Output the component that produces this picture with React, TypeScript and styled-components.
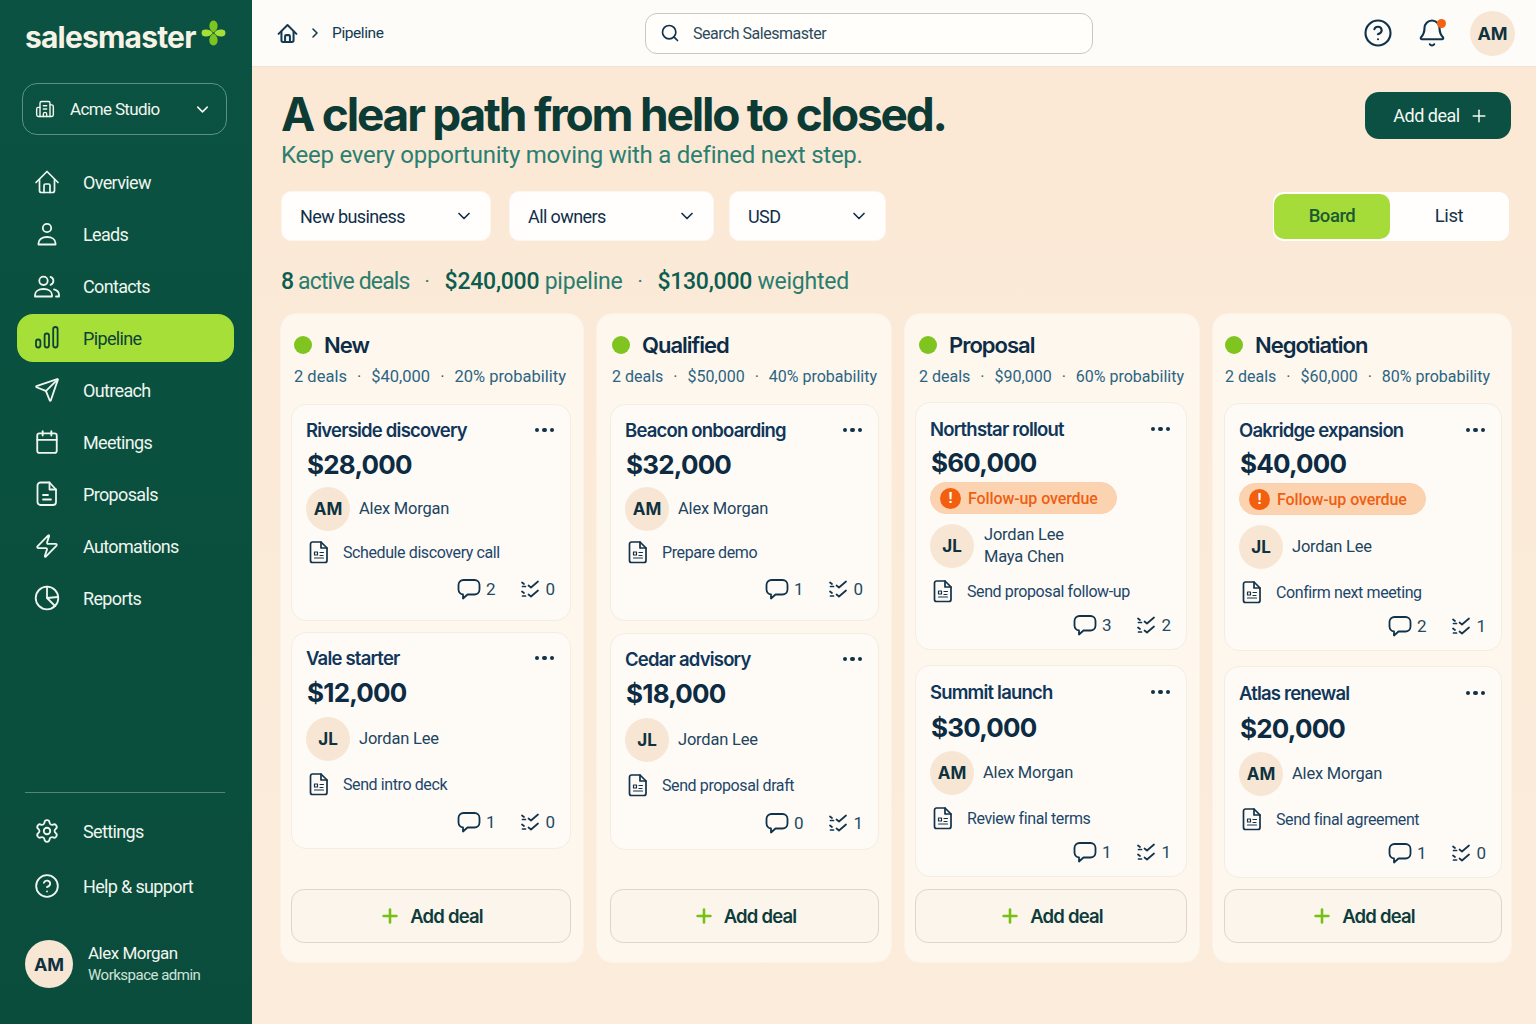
import React from 'react';
import styled, { createGlobalStyle } from 'styled-components';
import {
  Send,
  Calendar,
  Zap,
  Settings,
  CircleHelp,
  Bell,
  Search,
  ChevronDown,
  ChevronRight,
  Plus,
  Building2,
} from 'lucide-react';

const GlobalStyle = createGlobalStyle`
  html, body {
    margin: 0;
    padding: 0;
    background: #fbe9d6;
  }
  * {
    box-sizing: border-box;
  }
  body {
    font-family: Roboto, "Noto Sans", sans-serif;
    color: #10324a;
  }
`;

const headingFont = 'Inter, "Noto Sans", sans-serif';

const Shell = styled.div`
  display: flex;
  width: 1536px;
  height: 1024px;
  overflow: hidden;
`;

const Sidebar = styled.aside`
  flex: 0 0 252px;
  display: flex;
  flex-direction: column;
  padding: 0 18px 36px 17px;
  background: linear-gradient(180deg, #0b5242 0%, #0a4f3e 60%, #0b4d3d 100%);
  color: #f1f6ee;
`;

const Brand = styled.div`
  display: flex;
  align-items: center;
  gap: 5px;
  height: 83px;
  padding: 0 0 9px 8px;
`;

const BrandName = styled.span`
  font-family: ${headingFont};
  font-size: 30px;
  font-weight: 700;
  letter-spacing: -0.8px;
  color: #f7f2e6;
`;

const BrandMark = styled.svg`
  width: 25px;
  height: 28px;
  margin-top: -9px;
`;

const WorkspaceSelect = styled.div`
  display: flex;
  align-items: center;
  height: 52px;
  margin: 0 7px 0 5px;
  padding: 0 14px 0 12px;
  border: 1px solid rgba(210, 232, 222, 0.42);
  border-radius: 15px;
  font-size: 17px;
  letter-spacing: -0.65px;
  gap: 15px;
  & > span {
    flex: 1;
  }
`;

const NavList = styled.nav`
  display: flex;
  flex-direction: column;
  gap: 4px;
  margin-top: 23px;
`;

const NavItem = styled.div<{ $active?: boolean }>`
  display: flex;
  align-items: center;
  height: 48px;
  gap: 23px;
  padding-left: 17px;
  border-radius: 16px;
  font-size: 18px;
  letter-spacing: -0.65px;
  background: ${(p) => (p.$active ? '#a5df38' : 'transparent')};
  color: ${(p) => (p.$active ? '#0d4237' : '#eff6ef')};
  & > svg {
    flex: 0 0 26px;
  }
`;

const SidebarFoot = styled.div`
  margin-top: auto;
  display: flex;
  flex-direction: column;
  gap: 7px;
`;

const Divider = styled.div`
  height: 1px;
  margin: 0 9px 7px 8px;
  background: rgba(190, 222, 208, 0.4);
`;

const UserRow = styled.div`
  display: flex;
  align-items: center;
  gap: 15px;
  margin: 23px 0 0 8px;
`;

const UserText = styled.div`
  display: flex;
  flex-direction: column;
  gap: 3px;
  margin-top: -2px;
`;

const UserName = styled.span`
  font-size: 17px;
  letter-spacing: -0.5px;
`;

const UserRole = styled.span`
  font-size: 15px;
  letter-spacing: -0.5px;
  color: #cfe2d8;
`;

const Avatar = styled.div<{ $size: number; $font: number }>`
  flex: 0 0 ${(p) => p.$size}px;
  width: ${(p) => p.$size}px;
  height: ${(p) => p.$size}px;
  border-radius: 50%;
  display: flex;
  align-items: center;
  justify-content: center;
  background: #f8e6d4;
  color: #0f3240;
  font-family: ${headingFont};
  font-size: ${(p) => p.$font}px;
  font-weight: 700;
`;

const Content = styled.main`
  flex: 1;
  display: flex;
  flex-direction: column;
  min-width: 0;
  background: linear-gradient(180deg, #fbe8d5 0%, #fbebd9 60%, #fbecdc 100%);
`;

const TopBar = styled.header`
  flex: 0 0 67px;
  display: grid;
  grid-template-columns: 368px 448px 1fr;
  align-items: center;
  padding: 0 21px 0 25px;
  background: #fefcf9;
  border-bottom: 1px solid #f3e0d1;
`;

const Crumbs = styled.div`
  display: flex;
  align-items: center;
  gap: 9px;
  font-size: 15.5px;
  letter-spacing: -0.4px;
  color: #123a52;
`;

const SearchBox = styled.div`
  display: flex;
  align-items: center;
  gap: 13px;
  height: 41px;
  padding: 0 14px;
  border: 1px solid #c6c8c2;
  border-radius: 12px;
  background: #fffefb;
  font-size: 16px;
  letter-spacing: -0.5px;
  color: #2c4a5c;
`;

const TopActions = styled.div`
  display: flex;
  justify-content: flex-end;
  align-items: center;
  gap: 24px;
  color: #12324a;
`;

const BellWrap = styled.div`
  position: relative;
  display: flex;
  margin-right: -1px;
`;

const BellDot = styled.span`
  position: absolute;
  top: 1px;
  right: 1px;
  width: 9px;
  height: 9px;
  border-radius: 50%;
  background: #f4630f;
`;

const Body = styled.div`
  flex: 1;
  display: flex;
  flex-direction: column;
  padding: 0 24px 0 28px;
`;

const Hero = styled.section`
  display: flex;
  justify-content: space-between;
  align-items: flex-start;
  padding-top: 22px;
`;

const Title = styled.h1`
  margin: 0 0 0 1px;
  font-family: ${headingFont};
  font-size: 46px;
  line-height: 50px;
  font-weight: 700;
  letter-spacing: -2.2px;
  color: #0c3a34;
`;

const Subtitle = styled.p`
  margin: 1px 0 0 1px;
  font-size: 24px;
  line-height: 30px;
  letter-spacing: -0.25px;
  color: #2b7f70;
`;

const PrimaryButton = styled.button`
  display: flex;
  align-items: center;
  justify-content: center;
  gap: 9px;
  width: 146px;
  height: 47px;
  margin-top: 3px;
  margin-right: 1px;
  padding-left: 12px;
  border: 0;
  border-radius: 14px;
  background: #0b5042;
  color: #f3f8f2;
  font-family: inherit;
  font-size: 18px;
  letter-spacing: -0.5px;
`;

const FilterRow = styled.div`
  display: flex;
  align-items: center;
  margin-top: 21px;
  padding-left: 1px;
`;

const Filter = styled.div<{ $width: number; $after: number }>`
  display: flex;
  align-items: center;
  justify-content: space-between;
  width: ${(p) => p.$width}px;
  height: 50px;
  margin-right: ${(p) => p.$after}px;
  padding: 0 16px 0 18px;
  border: 1px solid #fdf6ee;
  border-radius: 10px;
  background: #fffefc;
  font-size: 18px;
  letter-spacing: -0.6px;
  color: #0f2f4b;
`;

const ViewToggle = styled.div`
  margin-left: auto;
  margin-right: 3px;
  display: flex;
  width: 236px;
  height: 49px;
  padding: 2px 1px;
  border-radius: 10px;
  background: #fffefc;
`;

const ViewOption = styled.div<{ $active?: boolean }>`
  flex: ${(p) => (p.$active ? '0 0 116px' : '1')};
  display: flex;
  align-items: center;
  justify-content: center;
  border-radius: 10px;
  font-size: 18.5px;
  letter-spacing: -0.45px;
  font-weight: ${(p) => (p.$active ? 500 : 400)};
  background: ${(p) => (p.$active ? '#a5dc3a' : 'transparent')};
  color: ${(p) => (p.$active ? '#1a5a32' : '#12344a')};
`;

const Summary = styled.div`
  display: flex;
  align-items: center;
  margin-top: 25px;
  padding-left: 1px;
  height: 30px;
  font-size: 23px;
  letter-spacing: -0.25px;
  color: #2a7d6e;
  & > span:first-child {
    letter-spacing: -0.85px;
  }
  & > i {
    font-style: normal;
    margin: 0 15px;
    font-size: 20px;
  }
  & b {
    font-weight: 500;
    color: #0c5d50;
  }
`;

const Board = styled.div`
  display: grid;
  grid-template-columns: 304px 296px 296px 300px;
  column-gap: 12px;
  flex: 0 0 650px;
  margin-top: 17px;
`;

const Column = styled.section<{ $left: number; $right: number }>`
  display: flex;
  flex-direction: column;
  padding: 0 ${(p) => p.$right}px 19px ${(p) => p.$left}px;
  border: 1px solid #fcf2e6;
  border-radius: 16px;
  background: #fdf7ee;
`;

const ColumnHead = styled.div<{ $height: number; $inset: number }>`
  height: ${(p) => p.$height}px;
  padding: 16px 0 0 ${(p) => p.$inset}px;
`;

const ColumnTitle = styled.h2`
  display: flex;
  align-items: center;
  gap: 12px;
  margin: 0;
  font-family: ${headingFont};
  font-size: 22px;
  line-height: 30px;
  font-weight: 600;
  letter-spacing: -1px;
  color: #0d2c46;
`;

const Dot = styled.span`
  width: 18px;
  height: 18px;
  border-radius: 50%;
  background: #7fc41f;
`;

const ColumnMeta = styled.div<{ $size: number }>`
  display: flex;
  gap: 10px;
  margin-top: 5px;
  font-size: ${(p) => p.$size}px;
  line-height: 24px;
  color: #2c6482;
  white-space: nowrap;
`;

const CardStack = styled.div<{ $gap: number }>`
  display: flex;
  flex-direction: column;
  gap: ${(p) => p.$gap}px;
`;

const Card = styled.article<{ $dense: boolean }>`
  display: flex;
  flex-direction: column;
  padding: ${(p) => (p.$dense ? 13 : 12)}px 15px 0 14px;
  border: 1px solid #f5ece2;
  border-radius: 15px;
  background: #fefbf7;
`;

const CardTop = styled.div`
  display: flex;
  align-items: center;
  justify-content: space-between;
  height: 26px;
  font-family: ${headingFont};
  font-size: 18.5px;
  font-weight: 600;
  letter-spacing: -0.8px;
  color: #10365a;
`;

const MoreDots = styled.div`
  display: flex;
  gap: 3px;
  margin-right: 1px;
  & > span {
    width: 4.5px;
    height: 4.5px;
    border-radius: 50%;
    background: #10324a;
  }
`;

const Amount = styled.div<{ $height: number }>`
  height: ${(p) => p.$height}px;
  display: flex;
  align-items: center;
  padding: 1px 0 0 1px;
  font-family: ${headingFont};
  font-size: 26px;
  font-weight: 700;
  letter-spacing: -0.8px;
  color: #0d2b42;
`;

const OverdueBadge = styled.div`
  display: inline-flex;
  align-self: flex-start;
  align-items: center;
  gap: 7px;
  height: 32px;
  margin: 1px 0 7px 0;
  padding: 0 18px 0 9px;
  border: 1px solid #fbd0ae;
  border-radius: 16px;
  background: #fcd3b0;
  font-size: 16px;
  font-weight: 500;
  letter-spacing: -0.1px;
  color: #ee5f12;
`;

const AlertCircle = styled.span`
  width: 21px;
  height: 21px;
  border-radius: 50%;
  display: flex;
  align-items: center;
  justify-content: center;
  background: #f2600f;
  color: #fff;
  font-size: 15px;
  font-weight: 700;
`;

const OwnerRow = styled.div<{ $spread: boolean }>`
  display: flex;
  align-items: center;
  gap: 9px;
  margin-top: ${(p) => (p.$spread ? 5 : 3)}px;
`;

const OwnerNames = styled.div<{ $wide: boolean }>`
  display: flex;
  flex-direction: column;
  padding-left: ${(p) => (p.$wide ? 1 : 0)}px;
  font-size: 16.5px;
  line-height: 22px;
  letter-spacing: -0.2px;
  color: #1d4560;
`;

const TaskRow = styled.div<{ $top: number }>`
  display: flex;
  align-items: center;
  gap: 13px;
  height: 24px;
  margin-top: ${(p) => p.$top}px;
  padding-left: 2px;
  font-size: 16px;
  letter-spacing: -0.4px;
  color: #1d466a;
`;

const CardFoot = styled.div<{ $top: number; $bottom: number }>`
  display: flex;
  justify-content: flex-end;
  align-items: center;
  gap: 25px;
  height: 24px;
  margin-top: ${(p) => p.$top}px;
  margin-bottom: ${(p) => p.$bottom}px;
  font-size: 17px;
  color: #224a62;
`;

const Stat = styled.span`
  display: flex;
  align-items: center;
  gap: 5px;
  color: #224a62;
  & > svg {
    color: #10324a;
  }
`;

const AddDealButton = styled.button`
  margin-top: auto;
  display: flex;
  align-items: center;
  justify-content: center;
  gap: 9px;
  height: 54px;
  border: 1px solid #dcd7cc;
  border-radius: 13px;
  background: #fbf5ec;
  font-family: ${headingFont};
  font-size: 18.5px;
  font-weight: 600;
  letter-spacing: -0.8px;
  color: #0e3c3a;
  & > svg {
    color: #76c014;
  }
`;

const HomeIcon = ({ size, weight }: { size: number; weight: number }) => (
  <svg width={size} height={size} viewBox="0 0 26 26" fill="none" stroke="currentColor" strokeWidth={weight} strokeLinecap="round" strokeLinejoin="round">
    <path d="M2 13.500L13 2.500l11 11" />
    <path d="M5.500 10.500v11a2 2 0 0 0 2 2h11a2 2 0 0 0 2-2v-11" />
    <path d="M10 23.500v-7a1.500 1.500 0 0 1 1.500-1.500h3a1.500 1.500 0 0 1 1.500 1.500v7" />
  </svg>
);

const UserIcon = () => (
  <svg width="26" height="26" viewBox="0 0 26 26" fill="none" stroke="currentColor" strokeWidth="1.8">
    <circle cx="13" cy="7" r="4.2" />
    <path d="M4.500 23.500v-1.200c0-4 3.600-6.300 8.500-6.300s8.500 2.300 8.500 6.300v1.200z" strokeLinejoin="round" />
  </svg>
);

const UsersIcon = () => (
  <svg width="26" height="26" viewBox="0 0 26 26" fill="none" stroke="currentColor" strokeWidth="1.8" strokeLinecap="round" strokeLinejoin="round">
    <circle cx="9.500" cy="7.800" r="4.200" />
    <path d="M1 23.500v-1.500c0-3.600 3.600-6 8.500-6s8.500 2.400 8.500 6v1.500z" />
    <path d="M16.500 3.800a4.200 4.200 0 0 1 0 8" />
    <path d="M20 16.400c3 .8 5 2.800 5 5.600v1.500h-3" />
  </svg>
);

const BarsIcon = () => (
  <svg width="26" height="26" viewBox="0 0 26 26" fill="none" stroke="currentColor" strokeWidth="1.8">
    <rect x="2" y="14.500" width="4.400" height="8" rx="2.200" />
    <rect x="10.600" y="8.500" width="4.400" height="14" rx="2.200" />
    <rect x="19.200" y="2" width="4.400" height="20.500" rx="2.200" />
  </svg>
);

const ProposalIcon = () => (
  <svg width="26" height="26" viewBox="0 0 26 26" fill="none" stroke="currentColor" strokeWidth="1.8" strokeLinecap="round" strokeLinejoin="round">
    <path d="M6.500 1.500h9l6.500 7v12.500a3 3 0 0 1-3 3h-12.500a3 3 0 0 1-3-3v-16.500a3 3 0 0 1 3-3z" />
    <path d="M15.500 1.500v7h6.500" />
    <path d="M9 14h5M9 18.500h8" />
  </svg>
);

const PieIcon = () => (
  <svg width="26" height="26" viewBox="0 0 26 26" fill="none" stroke="currentColor" strokeWidth="1.8" strokeLinecap="round" strokeLinejoin="round">
    <circle cx="13" cy="13" r="11.300" />
    <path d="M13 1.700V13l8 8" />
    <path d="M13 13l11-1" />
  </svg>
);

const DocIcon = () => (
  <svg width="22" height="24" viewBox="0 0 22 24" fill="none" stroke="#12324a" strokeWidth="1.7" strokeLinecap="round" strokeLinejoin="round">
    <path d="M4.500 2h8.500l6 6v12.500a2 2 0 0 1-2 2h-12.500a2 2 0 0 1-2-2v-16.500a2 2 0 0 1 2-2z" />
    <path d="M13 2v6h6" />
    <path d="M6.500 12h3v3h-3zM12 12.500h3.500M6.500 18h9M12 15.500h3" strokeWidth="1.2" />
  </svg>
);

const CommentIcon = () => (
  <svg width="24" height="24" viewBox="0 0 24 24" fill="none" stroke="currentColor" strokeWidth="1.8" strokeLinejoin="round">
    <path d="M6.500 3h11a5 5 0 0 1 5 5v4.500a5 5 0 0 1-5 5h-7l-4.500 4v-4.100a5 5 0 0 1-4.500-4.900v-4.500a5 5 0 0 1 5-5z" />
  </svg>
);

const ChecksIcon = () => (
  <svg width="20" height="20" viewBox="0 0 20 20" fill="none" stroke="currentColor" strokeWidth="1.700" strokeLinecap="round" strokeLinejoin="round">
    <path d="M8.500 6.500l2.500 2 7-6" />
    <path d="M8.500 15.500l2.500 2 7-6" />
    <path d="M2 3.500l2 1.500M2.500 7.500h3M2 12.500l2 1.500M2.500 17h3" />
  </svg>
);

type Deal = {
  name: string;
  amount: string;
  initials: string;
  owners: string[];
  task: string;
  comments: number;
  checks: number;
  overdue?: boolean;
  spread?: boolean;
};

type Stage = {
  title: string;
  deals: string;
  total: string;
  probability: string;
  left: number;
  right: number;
  inset: number;
  headHeight: number;
  cardGap: number;
  metaSize: number;
  dense: boolean;
  items: Deal[];
};

const stages: Stage[] = [
  {
    title: 'New',
    deals: '2 deals',
    total: '$40,000',
    probability: '20% probability',
    left: 10,
    right: 12,
    inset: 3,
    headHeight: 90,
    cardGap: 11,
    metaSize: 16.5,
    dense: false,
    items: [
      { name: 'Riverside discovery', amount: '$28,000', initials: 'AM', owners: ['Alex Morgan'], task: 'Schedule discovery call', comments: 2, checks: 0 },
      { name: 'Vale starter', amount: '$12,000', initials: 'JL', owners: ['Jordan Lee'], task: 'Send intro deck', comments: 1, checks: 0, spread: true },
    ],
  },
  {
    title: 'Qualified',
    deals: '2 deals',
    total: '$50,000',
    probability: '40% probability',
    left: 13,
    right: 12,
    inset: 2,
    headHeight: 90,
    cardGap: 12,
    metaSize: 16,
    dense: false,
    items: [
      { name: 'Beacon onboarding', amount: '$32,000', initials: 'AM', owners: ['Alex Morgan'], task: 'Prepare demo', comments: 1, checks: 0 },
      { name: 'Cedar advisory', amount: '$18,000', initials: 'JL', owners: ['Jordan Lee'], task: 'Send proposal draft', comments: 0, checks: 1, spread: true },
    ],
  },
  {
    title: 'Proposal',
    deals: '2 deals',
    total: '$90,000',
    probability: '60% probability',
    left: 10,
    right: 12,
    inset: 4,
    headHeight: 88,
    cardGap: 15,
    metaSize: 16,
    dense: true,
    items: [
      { name: 'Northstar rollout', amount: '$60,000', initials: 'JL', owners: ['Jordan Lee', 'Maya Chen'], task: 'Send proposal follow-up', comments: 3, checks: 2, overdue: true },
      { name: 'Summit launch', amount: '$30,000', initials: 'AM', owners: ['Alex Morgan'], task: 'Review final terms', comments: 1, checks: 1 },
    ],
  },
  {
    title: 'Negotiation',
    deals: '2 deals',
    total: '$60,000',
    probability: '80% probability',
    left: 11,
    right: 9,
    inset: 1,
    headHeight: 89,
    cardGap: 15,
    metaSize: 16,
    dense: true,
    items: [
      { name: 'Oakridge expansion', amount: '$40,000', initials: 'JL', owners: ['Jordan Lee'], task: 'Confirm next meeting', comments: 2, checks: 1, overdue: true },
      { name: 'Atlas renewal', amount: '$20,000', initials: 'AM', owners: ['Alex Morgan'], task: 'Send final agreement', comments: 1, checks: 0 },
    ],
  },
];

const amountHeight = (dense: boolean, overdue?: boolean) => {
  if (!dense) return 41;
  return overdue ? 39 : 43;
};

const DealCard = ({ deal, dense }: { deal: Deal; dense: boolean }) => {
  const spread = Boolean(deal.spread);
  const taskTop = dense || spread ? 11 : 9;
  const footTop = dense ? 10 : spread ? 14 : 13;
  const footBottom = dense ? 12 : spread ? 14 : 19;

  return (
    <Card $dense={dense}>
      <CardTop>
        {deal.name}
        <MoreDots>
          <span />
          <span />
          <span />
        </MoreDots>
      </CardTop>
      <Amount $height={amountHeight(dense, deal.overdue)}>{deal.amount}</Amount>
      {deal.overdue && (
        <OverdueBadge>
          <AlertCircle>!</AlertCircle>
          Follow-up overdue
        </OverdueBadge>
      )}
      <OwnerRow $spread={spread}>
        <Avatar $size={44} $font={17}>{deal.initials}</Avatar>
        <OwnerNames $wide={deal.owners.length > 1}>
          {deal.owners.map((o) => (
            <span key={o}>{o}</span>
          ))}
        </OwnerNames>
      </OwnerRow>
      <TaskRow $top={taskTop}>
        <DocIcon />
        {deal.task}
      </TaskRow>
      <CardFoot $top={footTop} $bottom={footBottom}>
        <Stat>
          <CommentIcon />
          {deal.comments}
        </Stat>
        <Stat>
          <ChecksIcon />
          {deal.checks}
        </Stat>
      </CardFoot>
    </Card>
  );
};

export default function App() {
  return (
    <>
      <GlobalStyle />
      <Shell>
        <Sidebar>
          <Brand>
            <BrandName>salesmaster</BrandName>
            <BrandMark viewBox="0 0 26 28">
              <g fill="#7cc520">
                <path d="M13 13.500C7.500 10.500 8 4 10.500 2C12 .8 14 .8 15.500 2C18 4 18.500 10.500 13 13.500z" />
                <path d="M13 14.500C7.500 17.500 8 24 10.500 26C12 27.200 14 27.200 15.500 26C18 24 18.500 17.500 13 14.500z" />
                <path d="M12.200 14C9.500 9.800 4 9.800 1.500 11.500C.3 12.800 .3 15.200 1.500 16.500C4 18.200 9.500 18.200 12.200 14z" fill="#a5df38" />
                <path d="M13.800 14C16.500 9.800 22 9.800 24.500 11.500C25.700 12.800 25.700 15.200 24.500 16.500C22 18.200 16.500 18.200 13.800 14z" fill="#a5df38" />
              </g>
            </BrandMark>
          </Brand>
          <WorkspaceSelect>
            <Building2 size={20} strokeWidth={1.7} />
            <span>Acme Studio</span>
            <ChevronDown size={19} strokeWidth={2} />
          </WorkspaceSelect>
          <NavList>
            <NavItem><HomeIcon size={26} weight={1.7} />Overview</NavItem>
            <NavItem><UserIcon />Leads</NavItem>
            <NavItem><UsersIcon />Contacts</NavItem>
            <NavItem $active><BarsIcon />Pipeline</NavItem>
            <NavItem><Send size={26} strokeWidth={1.7} />Outreach</NavItem>
            <NavItem><Calendar size={26} strokeWidth={1.7} />Meetings</NavItem>
            <NavItem><ProposalIcon />Proposals</NavItem>
            <NavItem><Zap size={26} strokeWidth={1.7} />Automations</NavItem>
            <NavItem><PieIcon />Reports</NavItem>
          </NavList>
          <SidebarFoot>
            <Divider />
            <NavItem><Settings size={26} strokeWidth={1.7} />Settings</NavItem>
            <NavItem><CircleHelp size={26} strokeWidth={1.7} />Help &amp; support</NavItem>
            <UserRow>
              <Avatar $size={48} $font={18}>AM</Avatar>
              <UserText>
                <UserName>Alex Morgan</UserName>
                <UserRole>Workspace admin</UserRole>
              </UserText>
            </UserRow>
          </SidebarFoot>
        </Sidebar>
        <Content>
          <TopBar>
            <Crumbs>
              <HomeIcon size={21} weight={2.5} />
              <ChevronRight size={16} strokeWidth={2.4} />
              <span>Pipeline</span>
            </Crumbs>
            <SearchBox>
              <Search size={20} strokeWidth={2} color="#10324a" />
              Search Salesmaster
            </SearchBox>
            <TopActions>
              <CircleHelp size={30} strokeWidth={1.7} />
              <BellWrap>
                <Bell size={30} strokeWidth={1.7} />
                <BellDot />
              </BellWrap>
              <Avatar $size={45} $font={18}>AM</Avatar>
            </TopActions>
          </TopBar>
          <Body>
            <Hero>
              <div>
                <Title>A clear path from hello to closed.</Title>
                <Subtitle>Keep every opportunity moving with a defined next step.</Subtitle>
              </div>
              <PrimaryButton>
                Add deal
                <Plus size={20} strokeWidth={1.8} />
              </PrimaryButton>
            </Hero>
            <FilterRow>
              <Filter $width={210} $after={18}>New business<ChevronDown size={20} strokeWidth={2} /></Filter>
              <Filter $width={205} $after={15}>All owners<ChevronDown size={20} strokeWidth={2} /></Filter>
              <Filter $width={157} $after={0}>USD<ChevronDown size={20} strokeWidth={2} /></Filter>
              <ViewToggle>
                <ViewOption $active>Board</ViewOption>
                <ViewOption>List</ViewOption>
              </ViewToggle>
            </FilterRow>
            <Summary>
              <span><b>8</b> active deals</span>
              <i>·</i>
              <span><b>$240,000</b> pipeline</span>
              <i>·</i>
              <span><b>$130,000</b> weighted</span>
            </Summary>
            <Board>
              {stages.map((s) => (
                <Column key={s.title} $left={s.left} $right={s.right}>
                  <ColumnHead $height={s.headHeight} $inset={s.inset}>
                    <ColumnTitle>
                      <Dot />
                      {s.title}
                    </ColumnTitle>
                    <ColumnMeta $size={s.metaSize}>
                      <span>{s.deals}</span>·<span>{s.total}</span>·<span>{s.probability}</span>
                    </ColumnMeta>
                  </ColumnHead>
                  <CardStack $gap={s.cardGap}>
                    {s.items.map((d) => (
                      <DealCard key={d.name} deal={d} dense={s.dense} />
                    ))}
                  </CardStack>
                  <AddDealButton>
                    <Plus size={22} strokeWidth={2.8} />
                    Add deal
                  </AddDealButton>
                </Column>
              ))}
            </Board>
          </Body>
        </Content>
      </Shell>
    </>
  );
}
